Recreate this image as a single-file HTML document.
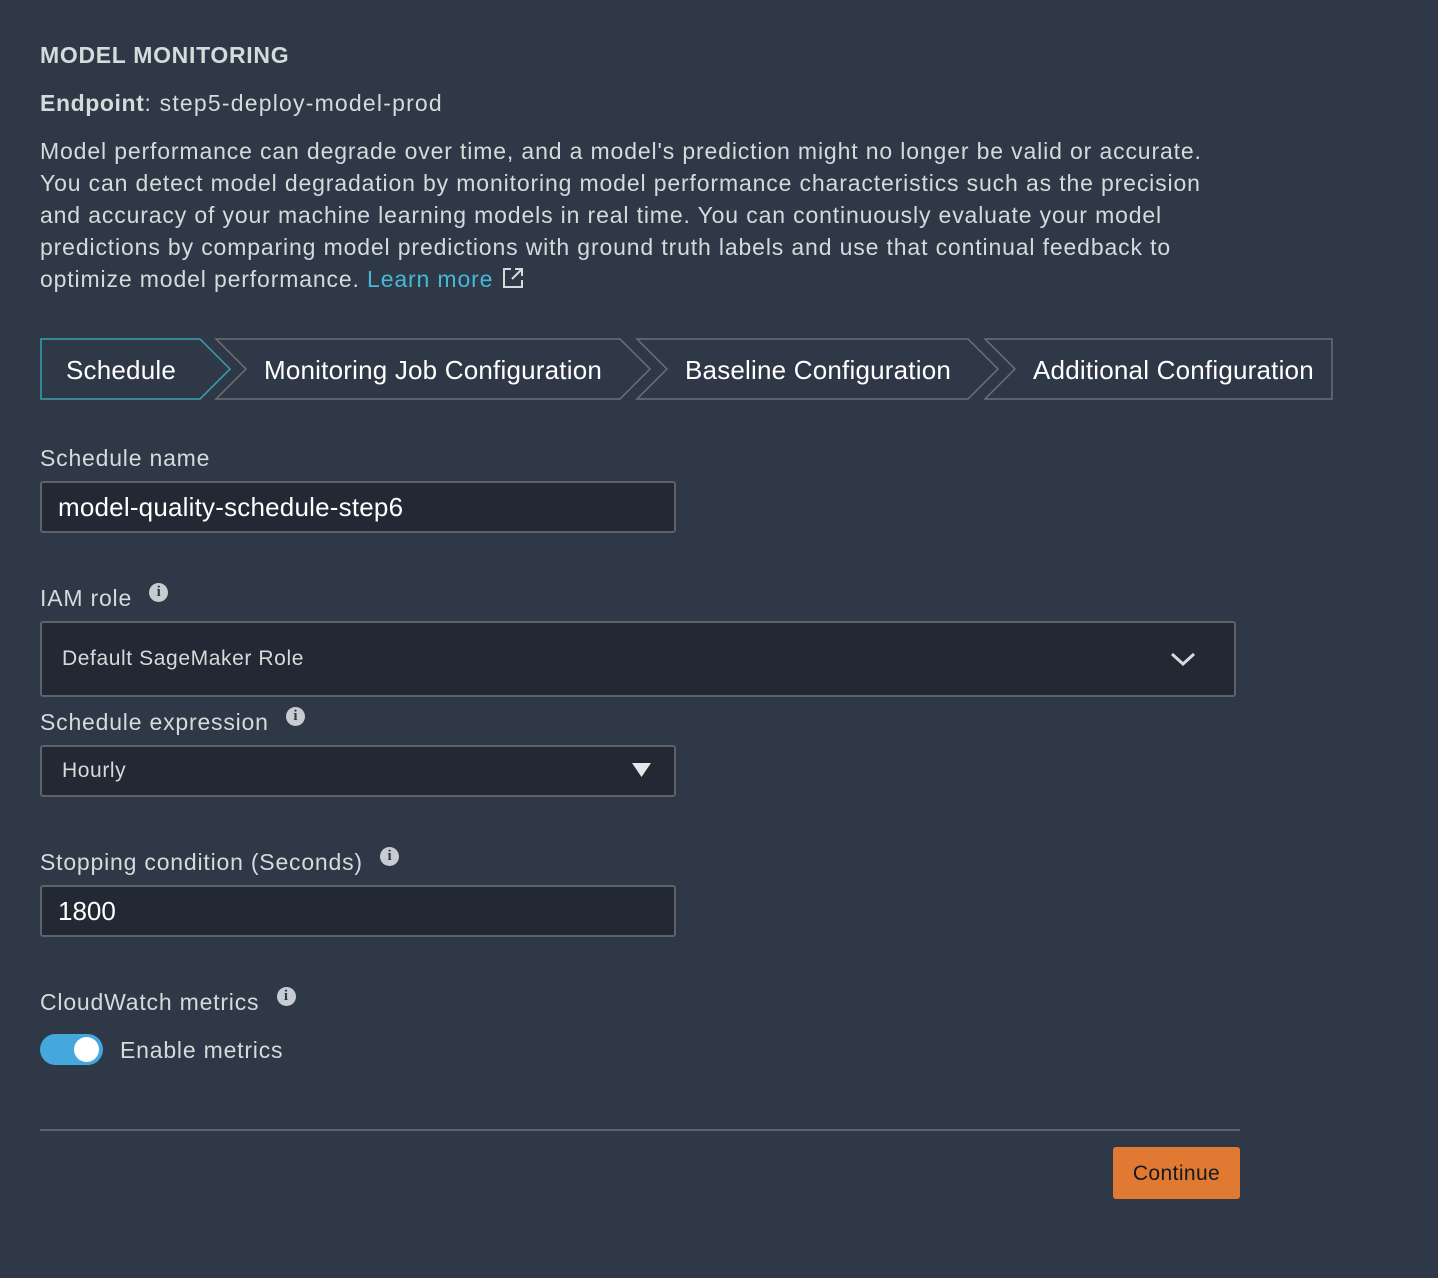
<!DOCTYPE html>
<html><head><meta charset="utf-8"><style>
html,body{margin:0;padding:0}
body{width:1438px;height:1278px;background:#2f3847;position:relative;overflow:hidden;font-family:"Liberation Sans","DejaVu Sans",sans-serif;color:#d5dbdb}
.a{position:absolute;white-space:nowrap}
.t{font-size:23px;letter-spacing:0.8px}
.box{position:absolute;background:#222834;border:2px solid #5f6368;border-radius:3px;box-sizing:border-box}
.info{display:inline-block;width:19px;height:19px;border-radius:50%;background:#c7ccd2;color:#2f3847;font:bold 15px/19px "Liberation Serif",serif;text-align:center;vertical-align:top;letter-spacing:0}
</style></head><body>
<div class="a" style="left:40px;top:42px;font-size:23px;font-weight:bold;letter-spacing:0.7px">MODEL MONITORING</div>
<div class="a t" style="left:40px;top:90px;letter-spacing:1.2px"><b style="letter-spacing:0.6px">Endpoint</b>: step5-deploy-model-prod</div>
<div class="a t" style="left:40px;top:135px;line-height:32px;width:1250px;white-space:nowrap;letter-spacing:0.86px">Model performance can degrade over time, and a model's prediction might no longer be valid or accurate.<br>You can detect model degradation by monitoring model performance characteristics such as the precision<br>and accuracy of your machine learning models in real time. You can continuously evaluate your model<br>predictions by comparing model predictions with ground truth labels and use that continual feedback to<br>optimize model performance. <span style="color:#44b9d6">Learn more <svg width="24" height="24" viewBox="0 0 24 24" style="vertical-align:-3px"><path d="M10 3H3v18h18v-7M14 3h7v7M21 3L11 13" fill="none" stroke="#d5dbdb" stroke-width="2"/></svg></span></div>

<svg class="a" style="left:0;top:0" width="1438" height="420">
<g fill="none" stroke-width="1.5">
<polygon points="216,339 620,339 650,369 620,399 216,399 246,369" stroke="#6b6f75"/>
<polygon points="637,339 968,339 998,369 968,399 637,399 667,369" stroke="#6b6f75"/>
<polygon points="985,339 1332,339 1332,399 985,399 1015,369" stroke="#6b6f75"/>
<polygon points="41,339 200,339 230,369 200,399 41,399" stroke="#3aa0b0" fill="#2f3847"/>
</g>
<g fill="#fff" font-family="Liberation Sans, sans-serif" font-size="26" letter-spacing="0.2">
<text x="66" y="379">Schedule</text>
<text x="264" y="379">Monitoring Job Configuration</text>
<text x="685" y="379">Baseline Configuration</text>
<text x="1033" y="379">Additional Configuration</text>
</g>
</svg>

<div class="a t" style="left:40px;top:445px">Schedule name</div>
<div class="box" style="left:40px;top:481px;width:636px;height:52px"></div>
<div class="a" style="left:58px;top:492px;font-size:26px;color:#fff;letter-spacing:0.2px">model-quality-schedule-step6</div>

<div class="a t" style="left:40px;top:585px">IAM role <span class="info" style="margin-left:10px;margin-top:-2px">i</span></div>
<div class="box" style="left:40px;top:621px;width:1196px;height:76px"></div>
<div class="a" style="left:62px;top:647px;font-size:21px;letter-spacing:0.6px">Default SageMaker Role</div>
<svg class="a" style="left:1170px;top:650px" width="26" height="20"><path d="M2 4l11 10 11-10" fill="none" stroke="#d5dbdb" stroke-width="3"/></svg>

<div class="a t" style="left:40px;top:709px">Schedule expression <span class="info" style="margin-left:10px;margin-top:-2px">i</span></div>
<div class="box" style="left:40px;top:745px;width:636px;height:52px"></div>
<div class="a" style="left:62px;top:759px;font-size:21px;letter-spacing:0.6px">Hourly</div>
<svg class="a" style="left:632px;top:763px" width="20" height="16"><path d="M0 0h19l-9.5 14z" fill="#e6e8ea"/></svg>

<div class="a t" style="left:40px;top:849px">Stopping condition (Seconds) <span class="info" style="margin-left:10px;margin-top:-2px">i</span></div>
<div class="box" style="left:40px;top:885px;width:636px;height:52px"></div>
<div class="a" style="left:58px;top:896px;font-size:26px;color:#fff">1800</div>

<div class="a t" style="left:40px;top:989px">CloudWatch metrics <span class="info" style="margin-left:10px;margin-top:-2px">i</span></div>
<div class="a" style="left:40px;top:1034px;width:63px;height:31px;border-radius:16px;background:#44a8dc"></div>
<div class="a" style="left:74px;top:1037px;width:25px;height:25px;border-radius:50%;background:#fff"></div>
<div class="a t" style="left:120px;top:1037px">Enable metrics</div>

<div class="a" style="left:40px;top:1129px;width:1200px;height:2px;background:#5f6368"></div>
<div class="a" style="left:1113px;top:1147px;width:127px;height:52px;background:#e07932;border-radius:3px;color:#16191f;font-size:21px;line-height:54px;text-align:center;letter-spacing:0.4px">Continue</div>
</body></html>
